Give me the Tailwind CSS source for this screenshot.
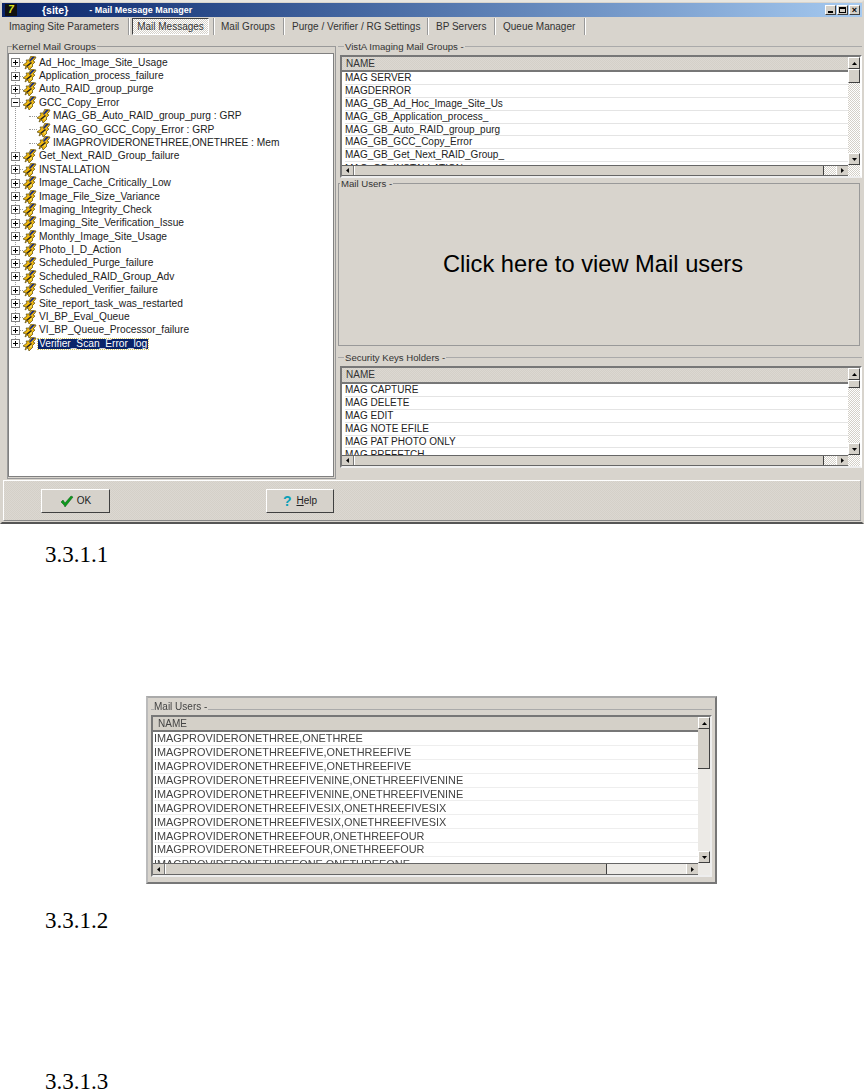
<!DOCTYPE html>
<html><head><meta charset="utf-8">
<script src="https://cdn.jsdelivr.net/npm/@tailwindcss/browser@4"></script>
</head>
<body class="w-[864px] h-[1090px] overflow-hidden bg-white font-['Liberation_Sans',sans-serif] text-[#222]">
<svg class="hidden"><defs>
<symbol id="k" viewBox="0 0 14 14">
<path d="M8 0 L13 1 L12 3 L10 5 L12 6 L9 9 L10 10 L6 14 L5 11 L2 13 L3 10 L0 9 L4 6 L3 4 L6 4 Z" fill="#f2b90f" stroke="#5a4a10" stroke-width=".7"/>
<path d="M9 1 L12 1 L7 6 L6 5 Z" fill="#1d2f7a"/><path d="M3 10 L8 6 L9 7 L4 11 Z" fill="#222"/><path d="M7 9 L9 8 L8 11 Z" fill="#fff27a"/>
</symbol>
<symbol id="p" viewBox="0 0 9 9"><rect x=".5" y=".5" width="8" height="8" fill="#fff" stroke="#808080"/><path d="M2 4.5H7M4.5 2V7" stroke="#000"/></symbol>
<symbol id="m" viewBox="0 0 9 9"><rect x=".5" y=".5" width="8" height="8" fill="#fff" stroke="#808080"/><path d="M2 4.5H7" stroke="#000"/></symbol>
<symbol id="up" viewBox="0 0 7 4"><path d="M3.5 0L7 4H0Z"/></symbol>
<symbol id="dn" viewBox="0 0 7 4"><path d="M3.5 4L7 0H0Z"/></symbol>
<symbol id="lf" viewBox="0 0 4 7"><path d="M0 3.5L4 0V7Z"/></symbol>
<symbol id="rt" viewBox="0 0 4 7"><path d="M4 3.5L0 0V7Z"/></symbol>
</defs></svg>

<!-- application window -->
<div class="w-[864px] h-[524px] flex flex-col bg-[#d8d4cd] border-t-2 border-t-[#e8e6e0] border-x-2 border-x-[#d8d4cd] border-b-2 border-b-[#555] text-[9.6px] leading-none">
  <div class="h-[14px] mt-[1px] flex items-center bg-gradient-to-r from-[#0a246a] to-[#a6caf0] text-white font-bold shrink-0">
    <span class="w-[12px] h-[12px] ml-[3px] bg-[#111] text-[#d8e020] text-[10px] italic leading-[12px] text-center">7</span>
    <span class="ml-[25px] text-[10.5px]">{site}</span>
    <span class="ml-[21px] text-[9px]">- Mail Message Manager</span>
    <div class="ml-auto flex gap-0 mr-[2px]">
      <span class="w-[11px] h-[10px] bg-[#d4d0c8] border border-t-white border-l-white border-r-[#404040] border-b-[#404040] flex items-end justify-center pb-[1px]"><i class="block w-[5px] h-[2px] bg-black"></i></span>
      <span class="w-[11px] h-[10px] ml-[1px] bg-[#d4d0c8] border border-t-white border-l-white border-r-[#404040] border-b-[#404040] flex items-center justify-center"><i class="block w-[7px] h-[6px] border border-black border-t-2"></i></span>
      <span class="w-[11px] h-[10px] ml-[1px] bg-[#d4d0c8] border border-t-white border-l-white border-r-[#404040] border-b-[#404040] text-black text-[9px] leading-[8px] text-center font-bold">×</span>
    </div>
  </div>
  <div class="h-[22px] pb-[3px] flex items-center shrink-0 text-[10px] text-[#333] pl-[7px]">
    <span class="w-[119px]">Imaging Site Parameters</span>
    <span class="h-[17px] w-[2px] border-x border-l-[#999] border-r-white"></span>
    <span class="ml-[2px] w-[77px] h-[17px] flex items-center justify-center border border-t-[#404040] border-l-[#404040] border-r-white border-b-white bg-[repeating-conic-gradient(#d4d0c8_0_25%,#fff_0_50%)] bg-[length:2px_2px]">Mail Messages</span>
    <span class="ml-[4px] h-[17px] w-[2px] border-x border-l-[#999] border-r-white"></span>
    <span class="ml-[6px] w-[62px]">Mail Groups</span>
    <span class="h-[17px] w-[2px] border-x border-l-[#999] border-r-white"></span>
    <span class="ml-[7px] w-[135px]">Purge / Verifier / RG Settings</span>
    <span class="h-[17px] w-[2px] border-x border-l-[#999] border-r-white"></span>
    <span class="ml-[7px] w-[58px]">BP Servers</span>
    <span class="h-[17px] w-[2px] border-x border-l-[#999] border-r-white"></span>
    <span class="ml-[7px] w-[81px]">Queue Manager</span>
    <span class="h-[17px] w-[2px] border-x border-l-[#999] border-r-white"></span>
  </div>

  <div class="flex h-[441px] shrink-0">
    <!-- left group -->
    <div class="relative w-[329px] ml-[5px] mt-[7px] h-[433px] border border-[#999] shrink-0">
      <span class="absolute left-[4px] top-[-5px] bg-[#d8d4cd] pr-[1px] text-[9.8px] text-[#333]">Kernel Mail Groups</span>
      <div class="mt-[6px] mr-[1px] h-[424px] bg-white border border-[#808080] relative pt-[2px] text-[10.2px] text-[#222]">
        <div class="absolute left-[6px] top-[8px] h-[283px] border-l border-dotted border-[#999]"></div>

        <div class="relative h-[13.4px] flex items-center pl-[2px]"><svg class="w-[9px] h-[9px]"><use href="#p"/></svg><span class="w-[3px] border-t border-dotted border-[#999]"></span><svg class="w-[14px] h-[14px]"><use href="#k"/></svg><span class="ml-[2px]">Ad_Hoc_Image_Site_Usage</span></div>
        <div class="relative h-[13.4px] flex items-center pl-[2px]"><svg class="w-[9px] h-[9px]"><use href="#p"/></svg><span class="w-[3px] border-t border-dotted border-[#999]"></span><svg class="w-[14px] h-[14px]"><use href="#k"/></svg><span class="ml-[2px]">Application_process_failure</span></div>
        <div class="relative h-[13.4px] flex items-center pl-[2px]"><svg class="w-[9px] h-[9px]"><use href="#p"/></svg><span class="w-[3px] border-t border-dotted border-[#999]"></span><svg class="w-[14px] h-[14px]"><use href="#k"/></svg><span class="ml-[2px]">Auto_RAID_group_purge</span></div>
        <div class="relative h-[13.4px] flex items-center pl-[2px]"><svg class="w-[9px] h-[9px]"><use href="#m"/></svg><span class="w-[3px] border-t border-dotted border-[#999]"></span><svg class="w-[14px] h-[14px]"><use href="#k"/></svg><span class="ml-[2px]">GCC_Copy_Error</span></div>
        <div class="relative h-[13.4px] flex items-center pl-[20px]"><span class="w-[8px] border-t border-dotted border-[#999]"></span><svg class="w-[14px] h-[14px]"><use href="#k"/></svg><span class="ml-[2px]">MAG_GB_Auto_RAID_group_purg : GRP</span></div>
        <div class="relative h-[13.4px] flex items-center pl-[20px]"><span class="w-[8px] border-t border-dotted border-[#999]"></span><svg class="w-[14px] h-[14px]"><use href="#k"/></svg><span class="ml-[2px]">MAG_GO_GCC_Copy_Error : GRP</span></div>
        <div class="relative h-[13.4px] flex items-center pl-[20px]"><span class="w-[8px] border-t border-dotted border-[#999]"></span><svg class="w-[14px] h-[14px]"><use href="#k"/></svg><span class="ml-[2px]">IMAGPROVIDERONETHREE,ONETHREE : Mem</span></div>
        <div class="relative h-[13.4px] flex items-center pl-[2px]"><svg class="w-[9px] h-[9px]"><use href="#p"/></svg><span class="w-[3px] border-t border-dotted border-[#999]"></span><svg class="w-[14px] h-[14px]"><use href="#k"/></svg><span class="ml-[2px]">Get_Next_RAID_Group_failure</span></div>
        <div class="relative h-[13.4px] flex items-center pl-[2px]"><svg class="w-[9px] h-[9px]"><use href="#p"/></svg><span class="w-[3px] border-t border-dotted border-[#999]"></span><svg class="w-[14px] h-[14px]"><use href="#k"/></svg><span class="ml-[2px]">INSTALLATION</span></div>
        <div class="relative h-[13.4px] flex items-center pl-[2px]"><svg class="w-[9px] h-[9px]"><use href="#p"/></svg><span class="w-[3px] border-t border-dotted border-[#999]"></span><svg class="w-[14px] h-[14px]"><use href="#k"/></svg><span class="ml-[2px]">Image_Cache_Critically_Low</span></div>
        <div class="relative h-[13.4px] flex items-center pl-[2px]"><svg class="w-[9px] h-[9px]"><use href="#p"/></svg><span class="w-[3px] border-t border-dotted border-[#999]"></span><svg class="w-[14px] h-[14px]"><use href="#k"/></svg><span class="ml-[2px]">Image_File_Size_Variance</span></div>
        <div class="relative h-[13.4px] flex items-center pl-[2px]"><svg class="w-[9px] h-[9px]"><use href="#p"/></svg><span class="w-[3px] border-t border-dotted border-[#999]"></span><svg class="w-[14px] h-[14px]"><use href="#k"/></svg><span class="ml-[2px]">Imaging_Integrity_Check</span></div>
        <div class="relative h-[13.4px] flex items-center pl-[2px]"><svg class="w-[9px] h-[9px]"><use href="#p"/></svg><span class="w-[3px] border-t border-dotted border-[#999]"></span><svg class="w-[14px] h-[14px]"><use href="#k"/></svg><span class="ml-[2px]">Imaging_Site_Verification_Issue</span></div>
        <div class="relative h-[13.4px] flex items-center pl-[2px]"><svg class="w-[9px] h-[9px]"><use href="#p"/></svg><span class="w-[3px] border-t border-dotted border-[#999]"></span><svg class="w-[14px] h-[14px]"><use href="#k"/></svg><span class="ml-[2px]">Monthly_Image_Site_Usage</span></div>
        <div class="relative h-[13.4px] flex items-center pl-[2px]"><svg class="w-[9px] h-[9px]"><use href="#p"/></svg><span class="w-[3px] border-t border-dotted border-[#999]"></span><svg class="w-[14px] h-[14px]"><use href="#k"/></svg><span class="ml-[2px]">Photo_I_D_Action</span></div>
        <div class="relative h-[13.4px] flex items-center pl-[2px]"><svg class="w-[9px] h-[9px]"><use href="#p"/></svg><span class="w-[3px] border-t border-dotted border-[#999]"></span><svg class="w-[14px] h-[14px]"><use href="#k"/></svg><span class="ml-[2px]">Scheduled_Purge_failure</span></div>
        <div class="relative h-[13.4px] flex items-center pl-[2px]"><svg class="w-[9px] h-[9px]"><use href="#p"/></svg><span class="w-[3px] border-t border-dotted border-[#999]"></span><svg class="w-[14px] h-[14px]"><use href="#k"/></svg><span class="ml-[2px]">Scheduled_RAID_Group_Adv</span></div>
        <div class="relative h-[13.4px] flex items-center pl-[2px]"><svg class="w-[9px] h-[9px]"><use href="#p"/></svg><span class="w-[3px] border-t border-dotted border-[#999]"></span><svg class="w-[14px] h-[14px]"><use href="#k"/></svg><span class="ml-[2px]">Scheduled_Verifier_failure</span></div>
        <div class="relative h-[13.4px] flex items-center pl-[2px]"><svg class="w-[9px] h-[9px]"><use href="#p"/></svg><span class="w-[3px] border-t border-dotted border-[#999]"></span><svg class="w-[14px] h-[14px]"><use href="#k"/></svg><span class="ml-[2px]">Site_report_task_was_restarted</span></div>
        <div class="relative h-[13.4px] flex items-center pl-[2px]"><svg class="w-[9px] h-[9px]"><use href="#p"/></svg><span class="w-[3px] border-t border-dotted border-[#999]"></span><svg class="w-[14px] h-[14px]"><use href="#k"/></svg><span class="ml-[2px]">VI_BP_Eval_Queue</span></div>
        <div class="relative h-[13.4px] flex items-center pl-[2px]"><svg class="w-[9px] h-[9px]"><use href="#p"/></svg><span class="w-[3px] border-t border-dotted border-[#999]"></span><svg class="w-[14px] h-[14px]"><use href="#k"/></svg><span class="ml-[2px]">VI_BP_Queue_Processor_failure</span></div>
        <div class="relative h-[13.4px] flex items-center pl-[2px]"><svg class="w-[9px] h-[9px]"><use href="#p"/></svg><span class="w-[3px] border-t border-dotted border-[#999]"></span><svg class="w-[14px] h-[14px]"><use href="#k"/></svg><span class="ml-[1px] px-[1px] bg-[#0a246a] text-white outline-1 outline-dotted outline-[#d8c860]">Verifier_Scan_Error_log</span></div>
      </div>
    </div>

    <!-- right column -->
    <div class="flex-1 ml-[2px] flex flex-col">
      <!-- VistA group -->
      <div class="relative mt-[7px] h-[132px] border-t border-[#aaa] shrink-0 pt-[8px] pl-[2px]">
        <span class="absolute left-[6px] top-[-5px] bg-[#d8d4cd] px-[1px] text-[#333]">VistA Imaging Mail Groups -</span>
        <div class="h-[123px] border-2 border-t-[#777] border-l-[#777] border-r-white border-b-[#eee] flex">
          <div class="flex-1 min-w-0 flex flex-col">
            <div class="h-[15px] shrink-0 pl-[4px] flex items-center border-b-2 border-b-[#777] text-[10px] text-[#333] bg-[repeating-conic-gradient(#d4d0c8_0_25%,#dcd8d2_0_50%)] bg-[length:2px_2px]">NAME</div>
            <div class="flex-1 bg-white overflow-hidden text-[10px] pl-[3px]">
              <div class="h-[12.9px] flex items-center border-b border-b-[#e4e4e4]">MAG SERVER</div>
              <div class="h-[12.9px] flex items-center border-b border-b-[#e4e4e4]">MAGDERROR</div>
              <div class="h-[12.9px] flex items-center border-b border-b-[#e4e4e4]">MAG_GB_Ad_Hoc_Image_Site_Us</div>
              <div class="h-[12.9px] flex items-center border-b border-b-[#e4e4e4]">MAG_GB_Application_process_</div>
              <div class="h-[12.9px] flex items-center border-b border-b-[#e4e4e4]">MAG_GB_Auto_RAID_group_purg</div>
              <div class="h-[12.9px] flex items-center border-b border-b-[#e4e4e4]">MAG_GB_GCC_Copy_Error</div>
              <div class="h-[12.9px] flex items-center border-b border-b-[#e4e4e4]">MAG_GB_Get_Next_RAID_Group_</div>
              <div class="h-[12.9px] flex items-center">MAG_GB_INSTALLATION</div>
            </div>
            <div class="h-[11px] shrink-0 flex items-stretch border-y border-[#666] bg-[#d4d0c8]">
              <span class="w-[12px] flex items-center justify-center border-r border-r-[#777]"><svg class="w-[3px] h-[5px]"><use href="#lf"/></svg></span>
              <span class="flex-1 border-r border-r-[#404040] border-l border-l-white"></span>
              <span class="w-[12px] bg-[repeating-conic-gradient(#d4d0c8_0_25%,#fff_0_50%)] bg-[length:2px_2px]"></span>
              <span class="w-[12px] flex items-center justify-center border-l border-l-white"><svg class="w-[3px] h-[5px]"><use href="#rt"/></svg></span>
            </div>
          </div>
          <div class="w-[12px] shrink-0 flex flex-col bg-[repeating-conic-gradient(#d4d0c8_0_25%,#fff_0_50%)] bg-[length:2px_2px] pb-[11px]">
            <span class="h-[12px] bg-[#d4d0c8] border border-t-white border-l-white border-r-[#404040] border-b-[#404040] flex items-center justify-center"><svg class="w-[5px] h-[3px]"><use href="#up"/></svg></span>
            <span class="h-[14px] bg-[#d4d0c8] border border-t-white border-l-white border-r-[#404040] border-b-[#404040]"></span>
            <span class="flex-1"></span>
            <span class="h-[12px] bg-[#d4d0c8] border border-t-white border-l-white border-r-[#404040] border-b-[#404040] flex items-center justify-center"><svg class="w-[5px] h-[3px]"><use href="#dn"/></svg></span>
          </div>
        </div>
      </div>

      <!-- Mail Users -->
      <div class="relative mt-[5px] mr-[2px] h-[163px] border border-[#999] shrink-0 flex items-center justify-center text-[23.7px] text-black">
        <span class="absolute left-[1px] top-[-5px] bg-[#d8d4cd] px-[1px] text-[9.6px] text-[#333]">Mail Users -</span>
        <span class="mr-[12px]">Click here to view Mail users</span>
      </div>

      <!-- Security keys -->
      <div class="relative mt-[11px] h-[112px] border-t border-[#aaa] shrink-0 pt-[8px] pl-[2px]">
        <span class="absolute left-[6px] top-[-5px] bg-[#d8d4cd] px-[1px] text-[#333]">Security Keys Holders -</span>
        <div class="h-[102px] border-2 border-t-[#777] border-l-[#777] border-r-white border-b-[#eee] flex">
          <div class="flex-1 min-w-0 flex flex-col">
            <div class="h-[16px] shrink-0 pl-[4px] flex items-center border-b-2 border-b-[#777] text-[10px] text-[#333] bg-[repeating-conic-gradient(#d4d0c8_0_25%,#dcd8d2_0_50%)] bg-[length:2px_2px]">NAME</div>
            <div class="flex-1 bg-white overflow-hidden text-[10px] pl-[3px]">
              <div class="h-[12.9px] flex items-center border-b border-b-[#e4e4e4]">MAG CAPTURE</div>
              <div class="h-[12.9px] flex items-center border-b border-b-[#e4e4e4]">MAG DELETE</div>
              <div class="h-[12.9px] flex items-center border-b border-b-[#e4e4e4]">MAG EDIT</div>
              <div class="h-[12.9px] flex items-center border-b border-b-[#e4e4e4]">MAG NOTE EFILE</div>
              <div class="h-[12.9px] flex items-center border-b border-b-[#e4e4e4]">MAG PAT PHOTO ONLY</div>
              <div class="h-[12.9px] flex items-center">MAG PREFETCH</div>
            </div>
            <div class="h-[11px] shrink-0 flex items-stretch border-y border-[#666] bg-[#d4d0c8]">
              <span class="w-[12px] flex items-center justify-center border-r border-r-[#777]"><svg class="w-[3px] h-[5px]"><use href="#lf"/></svg></span>
              <span class="flex-1 border-r border-r-[#404040] border-l border-l-white"></span>
              <span class="w-[12px] bg-[repeating-conic-gradient(#d4d0c8_0_25%,#fff_0_50%)] bg-[length:2px_2px]"></span>
              <span class="w-[12px] flex items-center justify-center border-l border-l-white"><svg class="w-[3px] h-[5px]"><use href="#rt"/></svg></span>
            </div>
          </div>
          <div class="w-[12px] shrink-0 flex flex-col bg-[repeating-conic-gradient(#d4d0c8_0_25%,#fff_0_50%)] bg-[length:2px_2px] pb-[11px]">
            <span class="h-[12px] bg-[#d4d0c8] border border-t-white border-l-white border-r-[#404040] border-b-[#404040] flex items-center justify-center"><svg class="w-[5px] h-[3px]"><use href="#up"/></svg></span>
            <span class="h-[8px] bg-[#d4d0c8] border border-t-white border-l-white border-r-[#404040] border-b-[#404040]"></span>
            <span class="flex-1"></span>
            <span class="h-[12px] bg-[#d4d0c8] border border-t-white border-l-white border-r-[#404040] border-b-[#404040] flex items-center justify-center"><svg class="w-[5px] h-[3px]"><use href="#dn"/></svg></span>
          </div>
        </div>
      </div>
    </div>
  </div>

  <!-- footer -->
  <div class="flex-1 mx-[1px] mb-[1px] border border-t-white border-l-white border-r-[#aaa] border-b-[#888] flex items-center pl-[37px] pt-[1px] bg-[repeating-conic-gradient(#d4d0c8_0_25%,#dcd8d2_0_50%)] bg-[length:2px_2px] text-[10px]">
    <div class="w-[69px] h-[24px] flex items-center justify-center gap-[3px] bg-[#d6d2cb] border border-t-white border-l-white border-r-[#404040] border-b-[#404040]">
      <svg class="w-[14px] h-[13px]" viewBox="0 0 14 13"><path d="M1 7L4 10L5 12L13 2L11 1L5 8L3 5Z" fill="#0c9a1c" stroke="#0a5a14" stroke-width=".5"/></svg><span>OK</span>
    </div>
    <div class="w-[68px] h-[24px] ml-[156px] flex items-center justify-center gap-[5px] bg-[#d6d2cb] border border-t-white border-l-white border-r-[#404040] border-b-[#404040]">
      <span class="font-bold text-[14px] text-[#0aa0b8]">?</span><span><u>H</u>elp</span>
    </div>
  </div>
</div>

<!-- document -->
<p class="ml-[45px] mt-[19px] h-[24px] font-['Liberation_Serif',serif] text-[23px] leading-[24px] text-black">3.3.1.1</p>

<div class="ml-[146px] mt-[129px] w-[571px] h-[188px] border-2 border-t-[#aaa] border-l-[#bbb] border-r-[#777] border-b-[#777] bg-[#d8d4cd] blur-[0.6px] pt-[2px] pl-[3px] pr-[3px] pb-[5px] flex flex-col text-[10.9px] text-[#444]">
  <div class="relative h-[10px] shrink-0 border-b border-[#aaa] mb-[3px]"><span class="absolute left-[3px] top-[-1px] bg-[#d8d4cd] pr-[1px] text-[10px]">Mail Users -</span></div>
  <div class="flex-1 min-h-0 flex border-2 border-t-[#777] border-l-[#777] border-r-[#eee] border-b-[#eee] mt-[2px]">
    <div class="flex-1 min-w-0 flex flex-col">
      <div class="h-[15px] shrink-0 pl-[5px] flex items-center border-b-2 border-b-[#777] bg-[#d4d0c8] text-[10px]">NAME</div>
      <div class="flex-1 min-h-0 bg-white overflow-hidden pl-[1px]">
        <div class="h-[13.9px] flex items-center border-b border-b-[#eee]">IMAGPROVIDERONETHREE,ONETHREE</div>
        <div class="h-[13.9px] flex items-center border-b border-b-[#eee]">IMAGPROVIDERONETHREEFIVE,ONETHREEFIVE</div>
        <div class="h-[13.9px] flex items-center border-b border-b-[#eee]">IMAGPROVIDERONETHREEFIVE,ONETHREEFIVE</div>
        <div class="h-[13.9px] flex items-center border-b border-b-[#eee]">IMAGPROVIDERONETHREEFIVENINE,ONETHREEFIVENINE</div>
        <div class="h-[13.9px] flex items-center border-b border-b-[#eee]">IMAGPROVIDERONETHREEFIVENINE,ONETHREEFIVENINE</div>
        <div class="h-[13.9px] flex items-center border-b border-b-[#eee]">IMAGPROVIDERONETHREEFIVESIX,ONETHREEFIVESIX</div>
        <div class="h-[13.9px] flex items-center border-b border-b-[#eee]">IMAGPROVIDERONETHREEFIVESIX,ONETHREEFIVESIX</div>
        <div class="h-[13.9px] flex items-center border-b border-b-[#eee]">IMAGPROVIDERONETHREEFOUR,ONETHREEFOUR</div>
        <div class="h-[13.9px] flex items-center border-b border-b-[#eee]">IMAGPROVIDERONETHREEFOUR,ONETHREEFOUR</div>
        <div class="h-[13.9px] flex items-center">IMAGPROVIDERONETHREEONE,ONETHREEONE</div>
      </div>
      <div class="h-[12px] shrink-0 flex items-stretch border-y border-[#666] bg-[#d4d0c8]">
        <span class="w-[12px] flex items-center justify-center border-r border-r-[#777]"><svg class="w-[3px] h-[5px]"><use href="#lf"/></svg></span>
        <span class="w-[442px] border-r border-r-[#404040] border-l border-l-white"></span>
        <span class="flex-1 bg-[#eceae6]"></span>
        <span class="w-[12px] flex items-center justify-center border-l border-l-white"><svg class="w-[3px] h-[5px]"><use href="#rt"/></svg></span>
      </div>
    </div>
    <div class="w-[12px] shrink-0 flex flex-col bg-[#eceae6] pb-[12px]">
      <span class="h-[12px] bg-[#d4d0c8] border border-t-white border-l-white border-r-[#404040] border-b-[#404040] flex items-center justify-center"><svg class="w-[5px] h-[3px]"><use href="#up"/></svg></span>
      <span class="h-[40px] bg-[#d4d0c8] border-b border-b-[#404040] border-r border-r-[#404040]"></span>
      <span class="flex-1"></span>
      <span class="h-[12px] bg-[#d4d0c8] border border-t-white border-l-white border-r-[#404040] border-b-[#404040] flex items-center justify-center"><svg class="w-[5px] h-[3px]"><use href="#dn"/></svg></span>
    </div>
  </div>
</div>

<p class="ml-[45px] mt-[25px] h-[24px] font-['Liberation_Serif',serif] text-[23px] leading-[24px] text-black">3.3.1.2</p>
<p class="ml-[45px] mt-[137px] h-[24px] font-['Liberation_Serif',serif] text-[23px] leading-[24px] text-black">3.3.1.3</p>
</body></html>
